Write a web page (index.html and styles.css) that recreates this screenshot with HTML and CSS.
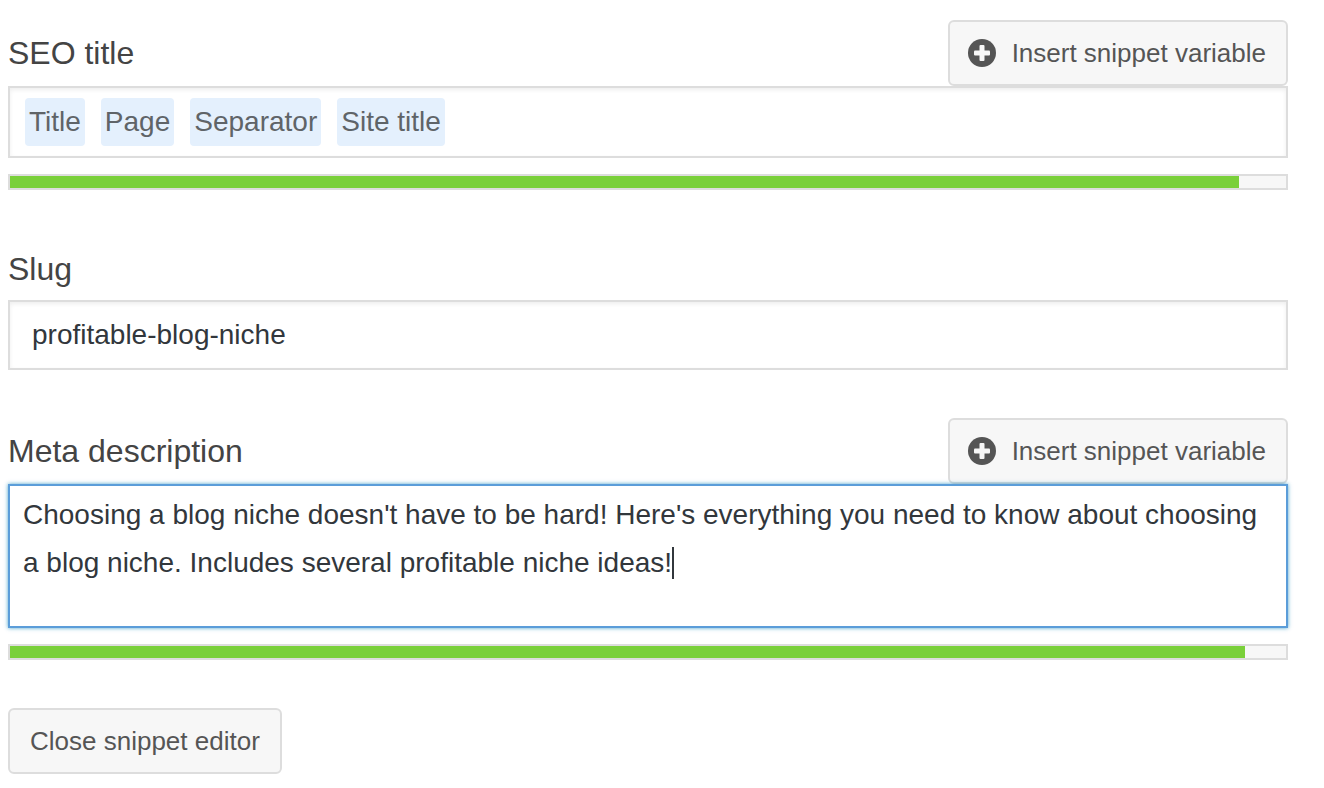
FILE: index.html
```html
<!DOCTYPE html>
<html lang="en">
<head>
    <meta charset="UTF-8">
    <meta name="viewport" content="width=device-width, initial-scale=1.0">
    <title>Snippet editor</title>
    <link rel="stylesheet" href="styles.css">
</head>
<body>

    <form class="snippet-editor">
        <section class="field">
            <div class="field-header">
                <span class="field-label" id="title-label">SEO title</span>
                <button type="button" class="button insert-button">
                    <svg class="plus-icon" viewBox="0 0 28 28" aria-hidden="true">
                        <circle cx="14" cy="14" r="14" fill="#555"/>
                        <rect x="11.500" y="6" width="5" height="16" rx="1" fill="#f7f7f7"/>
                        <rect x="6" y="11.500" width="16" height="5" rx="1" fill="#f7f7f7"/>
                    </svg>
                    Insert snippet variable
                </button>
            </div>
            <div class="input mention-input" role="textbox" aria-labelledby="title-label" contenteditable="true" spellcheck="false"><span class="mention">Title</span><span class="mention">Page</span><span class="mention">Separator</span><span class="mention">Site title</span></div>
            <progress class="length-bar" value="578" max="600" aria-label="SEO title width"></progress>
        </section>

        <section class="field">
            <div class="field-header">
                <label class="field-label" for="slug">Slug</label>
            </div>
            <input class="input slug-input" type="text" id="slug" value="profitable-blog-niche" spellcheck="false">
        </section>

        <section class="field">
            <div class="field-header">
                <label class="field-label" for="description">Meta description</label>
                <button type="button" class="button insert-button">
                    <svg class="plus-icon" viewBox="0 0 28 28" aria-hidden="true">
                        <circle cx="14" cy="14" r="14" fill="#555"/>
                        <rect x="11.500" y="6" width="5" height="16" rx="1" fill="#f7f7f7"/>
                        <rect x="6" y="11.500" width="16" height="5" rx="1" fill="#f7f7f7"/>
                    </svg>
                    Insert snippet variable
                </button>
            </div>
            <div class="description-wrap">
                <textarea class="input description-input is-active" id="description" spellcheck="false">Choosing a blog niche doesn't have to be hard! Here's everything you need to know about choosing a blog niche. Includes several profitable niche ideas!</textarea>
                <span class="caret" aria-hidden="true"></span>
            </div>
            <progress class="length-bar" value="151" max="156" aria-label="Meta description length"></progress>
        </section>

        <button type="button" class="button close-button">Close snippet editor</button>
    </form>

    <script>
        const description = document.querySelector('#description');
        const caret = document.querySelector('.caret');

        // find where the cursor is by laying out the same text in a hidden copy
        function placeCaret() {
            const mirror = document.createElement('div');
            const marker = document.createElement('span');
            mirror.className = 'input description-input description-mirror';
            mirror.textContent = description.value.slice(0, description.selectionEnd);
            marker.textContent = '\u200b';
            mirror.appendChild(marker);
            description.parentNode.appendChild(mirror);
            caret.style.left = marker.offsetLeft + 2 + 'px';
            caret.style.top = marker.offsetTop + 2 + 'px';
            mirror.remove();
        }

        description.focus();
        description.setSelectionRange(description.value.length, description.value.length);
        placeCaret();
        document.addEventListener('selectionchange', placeCaret);
        description.addEventListener('input', placeCaret);
        window.addEventListener('resize', placeCaret);
    </script>
</body>
</html>
```

FILE: styles.css
```css
* {
    box-sizing: border-box;
}
body {
    margin: 0;
    padding: 20px 36px 14px 8px;
    background-color: #fff;
    color: #32373c;
    font-family: "Liberation Sans", Arial, sans-serif;
    font-size: 28px;
}
.snippet-editor {
    display: flex;
    flex-direction: column;
    align-items: stretch;
    gap: 48px;
}
.field {
    display: flex;
    flex-direction: column;
}

/* Label row */
.field-header {
    display: flex;
    justify-content: space-between;
    align-items: center;
    min-height: 62px;
}
.field-label {
    color: #444;
    font-size: 32px;
    line-height: 40px;
}

/* Buttons */
.button {
    display: flex;
    align-items: center;
    height: 66px;
    padding: 0 20px;
    border: 2px solid #ddd;
    border-radius: 6px;
    background-color: #f7f7f7;
    color: #555;
    font-family: inherit;
    font-size: 26px;
    cursor: pointer;
}
.button:hover {
    border-color: #999;
}
.insert-button {
    gap: 16px;
    padding-left: 18px;
}
.plus-icon {
    width: 28px;
    height: 28px;
}
.close-button {
    align-self: flex-start;
}

/* Inputs */
.input {
    width: 100%;
    margin: 0;
    border: 2px solid #ddd;
    border-radius: 0;
    outline: none;
    background-color: #fff;
    box-shadow: inset 0 2px 4px rgba(0, 0, 0, 0.07);
    color: #32373c;
    font-family: inherit;
    font-size: 28px;
    line-height: 48px;
}
.input:focus,
.input.is-active {
    border-color: #5b9dd9;
    box-shadow: 0 0 4px rgba(30, 140, 190, 0.8);
}
.mention-input {
    padding: 10px 15px;
}
.mention {
    display: inline-block;
    margin-right: 16px;
    padding: 0 4px;
    border-radius: 4px;
    background-color: #e4f0fd;
    color: #5f6468;
}
.slug-input {
    height: 70px;
    padding: 0 22px;
}
.description-wrap {
    position: relative;
}
.description-input {
    display: block;
    height: 144px;
    padding: 5px 13px;
    resize: none;
    caret-color: transparent;
}
.description-mirror {
    position: absolute;
    top: 0;
    left: 0;
    visibility: hidden;
    white-space: pre-wrap;
    overflow-wrap: break-word;
}
.caret {
    display: none;
    position: absolute;
    width: 2px;
    height: 32px;
    background-color: #32373c;
    pointer-events: none;
}
.description-input.is-active + .caret {
    display: block;
}

/* Length bars */
.length-bar {
    display: block;
    width: 100%;
    height: 16px;
    margin-top: 16px;
    border: 2px solid #ddd;
    background-color: #f7f7f7;
    appearance: none;
}
.length-bar::-webkit-progress-bar {
    background-color: #f7f7f7;
}
.length-bar::-webkit-progress-value {
    background-color: #7ad03a;
}
.length-bar::-moz-progress-bar {
    background-color: #7ad03a;
}
```
